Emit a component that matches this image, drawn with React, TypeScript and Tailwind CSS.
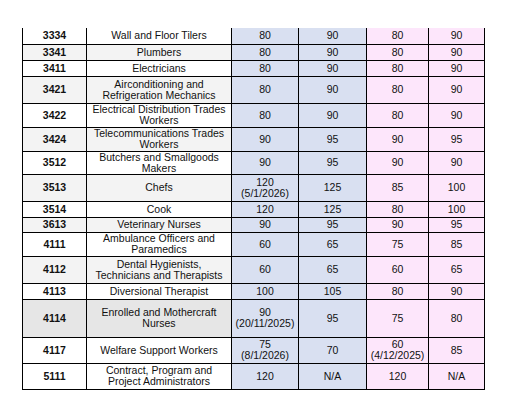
import React from 'react';

interface Row {
    code: string;
    name: string;
    a: string;
    b: string;
    c: string;
    d: string;
    h: string;
    bg: string;
}

// names carry their own line breaks so the wrapping matches the sheet
const rows: Row[] = [
    { code: '3334', name: 'Wall and Floor Tilers', a: '80', b: '90', c: '80', d: '90', h: 'h-[16px]', bg: 'bg-white' },
    { code: '3341', name: 'Plumbers', a: '80', b: '90', c: '80', d: '90', h: 'h-[16px]', bg: 'bg-[#f3f3f3]' },
    { code: '3411', name: 'Electricians', a: '80', b: '90', c: '80', d: '90', h: 'h-[16px]', bg: 'bg-white' },
    { code: '3421', name: 'Airconditioning and\nRefrigeration Mechanics', a: '80', b: '90', c: '80', d: '90', h: 'h-[27px]', bg: 'bg-[#f3f3f3]' },
    { code: '3422', name: 'Electrical Distribution Trades\nWorkers', a: '80', b: '90', c: '80', d: '90', h: 'h-[24px]', bg: 'bg-white' },
    { code: '3424', name: 'Telecommunications Trades\nWorkers', a: '90', b: '95', c: '90', d: '95', h: 'h-[24px]', bg: 'bg-[#f3f3f3]' },
    { code: '3512', name: 'Butchers and Smallgoods\nMakers', a: '90', b: '95', c: '90', d: '90', h: 'h-[22px]', bg: 'bg-white' },
    { code: '3513', name: 'Chefs', a: '120\n(5/1/2026)', b: '125', c: '85', d: '100', h: 'h-[27px]', bg: 'bg-[#f3f3f3]' },
    { code: '3514', name: 'Cook', a: '120', b: '125', c: '80', d: '100', h: 'h-[16px]', bg: 'bg-white' },
    { code: '3613', name: 'Veterinary Nurses', a: '90', b: '95', c: '90', d: '95', h: 'h-[15px]', bg: 'bg-[#f3f3f3]' },
    { code: '4111', name: 'Ambulance Officers and\nParamedics', a: '60', b: '65', c: '75', d: '85', h: 'h-[24px]', bg: 'bg-white' },
    { code: '4112', name: 'Dental Hygienists,\nTechnicians and Therapists', a: '60', b: '65', c: '60', d: '65', h: 'h-[27px]', bg: 'bg-[#f3f3f3]' },
    { code: '4113', name: 'Diversional Therapist', a: '100', b: '105', c: '80', d: '90', h: 'h-[16px]', bg: 'bg-white' },
    { code: '4114', name: 'Enrolled and Mothercraft\nNurses', a: '90\n(20/11/2025)', b: '95', c: '75', d: '80', h: 'h-[38px]', bg: 'bg-[#e6e6e6]' },
    { code: '4117', name: 'Welfare Support Workers', a: '75\n(8/1/2026)', b: '70', c: '60\n(4/12/2025)', d: '85', h: 'h-[26px]', bg: 'bg-white' },
    { code: '5111', name: 'Contract, Program and\nProject Administrators', a: '120', b: 'N/A', c: '120', d: 'N/A', h: 'h-[26px]', bg: 'bg-white' },
];

const cell = 'border border-black p-0 text-center align-middle leading-[11px] whitespace-pre-line';

export default function App() {
    return (
        <div className="w-[505px] h-[405px] bg-white pt-[28px] pl-[22px] font-['Liberation_Sans',Arial,sans-serif] text-[10.5px] text-[#111]">
            <table className="table-fixed border-collapse w-[462px]">
                <colgroup>
                    <col className="w-[64px]" />
                    <col className="w-[145px]" />
                    <col className="w-[67px]" />
                    <col className="w-[68px]" />
                    <col className="w-[62px]" />
                    <col className="w-[56px]" />
                </colgroup>
                <tbody>
                    {rows.map((r, i) => (
                        <tr key={r.code} className={`${r.h} ${i === 0 ? '[&>td]:border-t-0' : ''}`}>
                            <td className={`${cell} ${r.bg} font-bold`}>{r.code}</td>
                            <td className={`${cell} ${r.bg}`}>{r.name}</td>
                            <td className={`${cell} bg-[#d9e0f1]`}>{r.a}</td>
                            <td className={`${cell} bg-[#d9e0f1]`}>{r.b}</td>
                            <td className={`${cell} bg-[#fde6fb]`}>{r.c}</td>
                            <td className={`${cell} bg-[#fde6fb]`}>{r.d}</td>
                        </tr>
                    ))}
                </tbody>
            </table>
        </div>
    );
}
